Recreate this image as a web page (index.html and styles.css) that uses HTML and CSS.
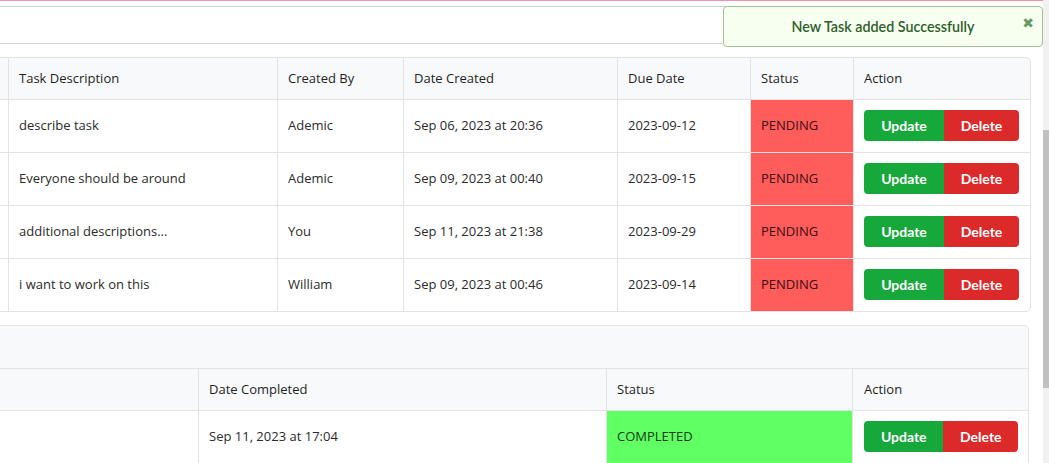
FILE: index.html
```html
<!DOCTYPE html>
<html lang="en">
<head>
<meta charset="utf-8">
<title>Tasks</title>
<link rel="stylesheet" href="styles.css">
</head>
<body>
<div class="topline"></div>
<main class="page">
  <div class="searchbox"></div>

  <table class="tbl tasks">
    <colgroup>
      <col style="width:68px"><col style="width:269px"><col style="width:126px"><col style="width:214px"><col style="width:133px"><col style="width:103px"><col style="width:176px">
    </colgroup>
    <thead>
      <tr><th></th><th>Task Description</th><th>Created By</th><th>Date Created</th><th>Due Date</th><th>Status</th><th>Action</th></tr>
    </thead>
    <tbody>
      <tr><td></td><td>describe task</td><td>Ademic</td><td>Sep 06, 2023 at 20:36</td><td>2023-09-12</td><td class="pending">PENDING</td><td><div class="btns"><button class="btn upd">Update</button><button class="btn del">Delete</button></div></td></tr>
      <tr><td></td><td>Everyone should be around</td><td>Ademic</td><td>Sep 09, 2023 at 00:40</td><td>2023-09-15</td><td class="pending">PENDING</td><td><div class="btns"><button class="btn upd">Update</button><button class="btn del">Delete</button></div></td></tr>
      <tr><td></td><td>additional descriptions...</td><td>You</td><td>Sep 11, 2023 at 21:38</td><td>2023-09-29</td><td class="pending">PENDING</td><td><div class="btns"><button class="btn upd">Update</button><button class="btn del">Delete</button></div></td></tr>
      <tr><td></td><td>i want to work on this</td><td>William</td><td>Sep 09, 2023 at 00:46</td><td>2023-09-14</td><td class="pending">PENDING</td><td><div class="btns"><button class="btn upd">Update</button><button class="btn del">Delete</button></div></td></tr>
    </tbody>
  </table>

  <section class="card">
    <div class="card-head"></div>
    <table class="tbl done">
      <colgroup>
        <col style="width:258px"><col style="width:408px"><col style="width:246px"><col>
      </colgroup>
      <thead>
        <tr><th></th><th>Date Completed</th><th>Status</th><th>Action</th></tr>
      </thead>
      <tbody>
        <tr><td></td><td>Sep 11, 2023 at 17:04</td><td class="completed">COMPLETED</td><td><div class="btns"><button class="btn upd">Update</button><button class="btn del">Delete</button></div></td></tr>
      </tbody>
    </table>
  </section>
</main>

<div class="toast">
  <span class="toast-text">New Task added Successfully</span>
  <span class="toast-close">&#x2716;</span>
</div>

<div class="scrollbar"><div class="thumb"></div></div>
</body>
</html>
```
FILE: styles.css
```css
html, body {
  margin: 0;
  padding: 0;
  overflow: hidden;
  background: #fff;
}
body {
  font-family: "Open Sans", "Noto Sans", sans-serif;
  font-size: 13px;
  color: #2b2b2b;
  width: 1049px;
  height: 463px;
}
.topline {
  height: 1px;
  background: #f590aa;
}
.page {
  margin-left: -60px;
  width: 1089px;
  padding-top: 5px;
  display: flex;
  flex-direction: column;
  gap: 13px;
}
.searchbox {
  height: 36px;
  border: 1px solid #d2d2d2;
  border-radius: 4px;
  background: #fff;
}
.tbl {
  border-collapse: separate;
  border-spacing: 0;
  table-layout: fixed;
  width: 1089px;
}
.tbl th, .tbl td {
  text-align: left;
  padding: 10px 10px 11px;
  line-height: 19px;
  border-right: 1px solid #e3e3e3;
  border-bottom: 1px solid #e3e3e3;
  white-space: nowrap;
  overflow: hidden;
}
.tbl th:last-child, .tbl td:last-child { border-right: 0; }
.tbl th {
  font-weight: 500;
  background: #f8f9fa;
  color: #1f1f1f;
  height: 20px;
}
.tbl td { height: 31px; }
.tasks {
  border: 1px solid #e3e3e3;
  border-radius: 5px;
  overflow: hidden;
}
.tasks tbody tr:last-child td { border-bottom: 0; }
.pending { background: #ff5c5c; color: #3a0d0d; }
.completed { background: #60ff64; color: #153a15; }

.card {
  border: 1px solid #e3e3e3;
  border-bottom: 0;
  border-radius: 5px 5px 0 0;
  overflow: hidden;
}
.card-head {
  height: 42px;
  background: #f8f9fa;
  border-bottom: 1px solid #e3e3e3;
}
.done { width: 100%; }
.done th:last-child, .done td:last-child { padding-left: 11px; }

.btns { display: flex; }
.btn {
  font-family: "Lato", "Liberation Sans", sans-serif;
  font-weight: 700;
  font-size: 14px;
  color: #fff;
  border: 0;
  height: 31px;
  padding: 0;
  cursor: pointer;
}
.upd { width: 80px; background: #17a83b; border-radius: 4px 0 0 4px; }
.del { width: 75px; background: #dc2a2a; border-radius: 0 4px 4px 0; }

.toast {
  position: absolute;
  left: 723px;
  top: 6px;
  width: 318px;
  height: 38px;
  border: 1px solid #a1c38d;
  border-radius: 4px;
  background: #f7fff0;
  display: flex;
  align-items: center;
  justify-content: center;
  font-family: "Lato", "Liberation Sans", sans-serif;
  font-size: 14.3px;
  font-weight: 600;
  color: #2d5e2b;
  padding-bottom: 1px;
  box-sizing: content-box;
}
.toast-close {
  position: absolute;
  right: 8px;
  top: 8px;
  font-size: 14px;
  font-weight: 700;
  color: #6b9a68;
  font-family: "DejaVu Sans", sans-serif;
}
.scrollbar {
  position: absolute;
  right: 0;
  top: 0;
  width: 6px;
  height: 463px;
  background: #f1f1f1;
}
.thumb {
  margin-top: 130px;
  height: 258px;
  background: #c1c1c1;
}
```
